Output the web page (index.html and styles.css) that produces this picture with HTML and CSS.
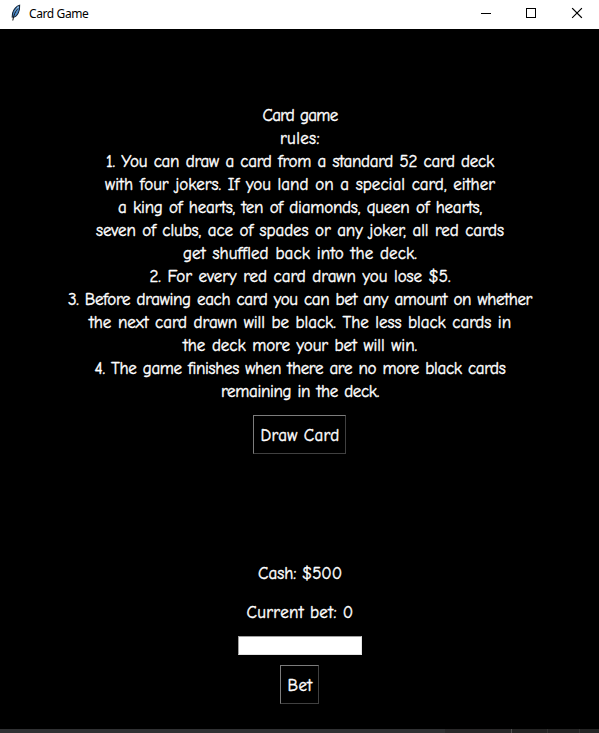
FILE: index.html
```html
<!DOCTYPE html>
<html lang="en">
<head>
<meta charset="utf-8">
<title>Card Game</title>
<link rel="stylesheet" href="styles.css">
</head>
<body>
<div class="window">
  <header class="titlebar">
    <svg class="feather" width="12" height="18" viewBox="0 0 12 18">
      <path d="M9.6 1.2C6.6 1.8 3.4 5.5 2.6 9.2L2.2 13l1.6.2C7 12.4 8.6 9 9.4 5.5Z" fill="#4f8fd0" stroke="#162638" stroke-width="1.1"/>
      <path d="M8.5 2.5 5.2 8.2" stroke="#a9d2f5" stroke-width="1.2"/>
      <path d="M7.8 4.5C5.5 7.5 3.5 11 2.8 16.5" fill="none" stroke="#111" stroke-width="1"/>
    </svg>
    <span class="title"><span data-width="59.5">Card Game</span></span>
    <svg class="controls" width="139" height="28" viewBox="0 0 139 28" fill="none" stroke="#000" shape-rendering="crispEdges">
      <path d="M21 13.5h10M66.5 8.5h9v9h-9z"/>
      <path d="m112.5 8.5 9 9m0-9-9 9" shape-rendering="auto" stroke-width="1.1" stroke-linecap="square"/>
    </svg>
  </header>
  <main class="game">
    <div class="rules">
      <div><span data-width="75">Card game</span></div>
      <div><span data-width="40">rules:</span></div>
      <div><span data-width="388">1. You can draw a card from a standard 52 card deck</span></div>
      <div><span data-width="390">with four jokers. If you land on a special card, either</span></div>
      <div><span data-width="364">a king of hearts, ten of diamonds, queen of hearts,</span></div>
      <div><span data-width="408">seven of clubs, ace of spades or any joker, all red cards</span></div>
      <div><span data-width="234">get shuffled back into the deck.</span></div>
      <div><span data-width="301">2. For every red card drawn you lose $5.</span></div>
      <div><span data-width="464">3. Before drawing each card you can bet any amount on whether</span></div>
      <div><span data-width="422">the next card drawn will be black. The less black cards in</span></div>
      <div><span data-width="234">the deck more your bet will win.</span></div>
      <div><span data-width="411">4. The game finishes when there are no more black cards</span></div>
      <div><span data-width="158">remaining in the deck.</span></div>
    </div>
    <button class="button draw"><span data-width="79">Draw Card</span></button>
    <div class="status cash"><span data-width="84">Cash: $500</span></div>
    <div class="status current"><span data-width="107">Current bet: 0</span></div>
    <input class="amount" type="text" aria-label="Bet amount">
    <button class="button bet"><span data-width="25">Bet</span></button>
  </main>
  <footer class="strip"><i></i><i></i><i></i><i></i><i></i></footer>
</div>
<script src="fit.js"></script>
</body>
</html>
```
FILE: styles.css
```css
* { box-sizing: border-box; }
body { margin: 0; background: #000; }
.window { width: 599px; height: 733px; display: flex; flex-direction: column; overflow: hidden; }
.titlebar { height: 29px; flex: none; display: flex; align-items: flex-start; background: #fff; color: #000; }
.feather { margin: 4px 0 0 10px; }
.title { margin-left: 7px; font: 12px/28px "Segoe UI", "Noto Sans", "Open Sans", sans-serif; white-space: nowrap; }
.controls { margin-left: auto; }
.game {
  flex: 1;
  display: flex;
  flex-direction: column;
  align-items: center;
  padding-top: 75px;
  color: #fff;
  font: 17px/23px "Comic Sans MS", "Comic Neue", "Open Sans", sans-serif;
  -webkit-text-stroke: 0.4px #fff;
  text-align: center;
  white-space: nowrap;
}
.game [data-width] { display: inline-block; margin-left: 1px; }
.title [data-width] { display: inline-block; }
.rules { height: 299px; word-spacing: 1px; }
.button {
  height: 39px;
  padding: 1px 0 0;
  border: 1px solid;
  border-color: #7c7c7c #404040 #404040 #7c7c7c;
  background: #000;
  color: inherit;
  font: inherit;
}
.draw { width: 93px; margin-top: 12px; }
.status { height: 23px; }
.cash { margin-top: 108px; }
.current { margin-top: 16px; }
.amount {
  width: 124px;
  height: 19px;
  margin: 12px 0 10px 1px;
  padding: 0 2px;
  border: 1px solid;
  border-color: #a0a0a0 #e3e3e3 #e3e3e3 #a0a0a0;
  border-radius: 0;
  background: #fff;
}
.bet { width: 39px; }
.strip {
  height: 4px;
  flex: none;
  display: grid;
  grid-template-columns: 445px 66px 36px 32px 1fr;
  background: #242424;
}
.strip i:first-child { background: #303133; }
.strip i:nth-child(2) { background: #292829; }
.strip i:nth-child(3) { border-left: 1px solid #505050; }
.strip i:nth-child(n+4) { border-left: 1px solid #333; }
```
FILE: fit.js
```js
// Spread each label's letters so that it takes up its set width.
for (const el of document.querySelectorAll('[data-width]')) {
  const width = Number(el.dataset.width);
  const count = el.textContent.length;
  const gap = (width - el.getBoundingClientRect().width) / count;
  el.style.letterSpacing = gap + 'px';
}
```
